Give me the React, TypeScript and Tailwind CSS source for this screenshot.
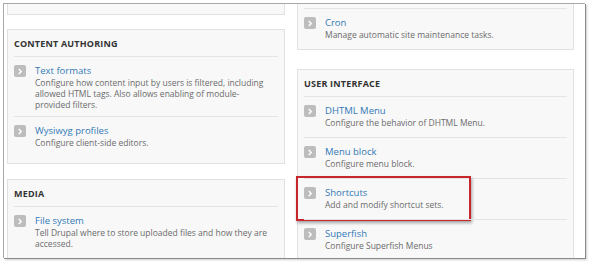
import React from 'react';

interface Item {
  title: string;
  desc: string[];
}

function Chevron() {
  return (
    <span className="flex h-[12px] w-[12px] shrink-0 items-center justify-center rounded-[2px] bg-[#bdbdbd]">
      <svg width="6" height="7" viewBox="0 0 6 7" fill="none">
        <path d="M1.8 1 L4.2 3.5 L1.8 6" stroke="#fff" strokeWidth="1.4" />
      </svg>
    </span>
  );
}

function Entry({ item, highlight }: { item: Item; highlight?: boolean }) {
  // multi-line descriptions sit a little tighter in the original
  const pad = item.desc.length > 1 ? 'pb-[6px]' : 'pb-[9px]';
  return (
    <div className={`relative border-t border-[#e4e4e4] pt-[8px] ${pad}`}>
      <div className="flex items-start gap-[9px]">
        <Chevron />
        <div>
          <div className="text-[9.5px] leading-[12px] text-[#3379b6]">{item.title}</div>
          {item.desc.map((line) => (
            <div key={line} className="text-[8.5px] leading-[11px] text-[#6b6b6b]">
              {line}
            </div>
          ))}
        </div>
      </div>
      {highlight && (
        <div className="absolute top-[-3px] bottom-[-2px] left-[-8px] w-[175px] border-2 border-[#c8262d] shadow-[1px_2px_3px_rgba(0,0,0,0.35)]" />
      )}
    </div>
  );
}

function Panel({ title, items, highlight, className }: { title: string; items: Item[]; highlight?: string; className?: string }) {
  return (
    <div className={`border border-[#e1e1e1] bg-[#f8f8f8] px-[6px] pb-[6px] ${className ?? ''}`}>
      <h2 className="pt-[8px] pb-[6px] text-[9px] leading-[12px] font-bold tracking-[0.2px] text-[#333]">{title}</h2>
      {items.map((it) => (
        <Entry key={it.title} item={it} highlight={it.title === highlight} />
      ))}
    </div>
  );
}

export default function App() {
  return (
    <div className="h-[263px] w-[589px] bg-white pt-[3px] pl-[3px] pr-[4px] pb-[5px]" style={{ fontFamily: '"Open Sans", "DejaVu Sans", sans-serif' }}>
      <div className="h-[255px] overflow-hidden border-t border-l border-[#a9a9a9] bg-white shadow-[1px_1px_0_#8a8a8a,2px_2px_2px_rgba(0,0,0,0.2)]">
        <div className="flex gap-[12px] pl-[3px]">
          {/* Left column */}
          <div className="w-[278px]">
            <div className="h-[11px] border border-t-0 border-[#e1e1e1] bg-[#f8f8f8]" />
            <Panel
              className="mt-[14px]"
              title="CONTENT AUTHORING"
              items={[
                {
                  title: 'Text formats',
                  desc: [
                    'Configure how content input by users is filtered, including',
                    'allowed HTML tags. Also allows enabling of module-',
                    'provided filters.',
                  ],
                },
                { title: 'Wysiwyg profiles', desc: ['Configure client-side editors.'] },
              ]}
            />
            <Panel
              className="mt-[15px] h-[120px]"
              title="MEDIA"
              items={[
                {
                  title: 'File system',
                  desc: ['Tell Drupal where to store uploaded files and how they are', 'accessed.'],
                },
              ]}
            />
          </div>

          {/* Right column */}
          <div className="w-[277px]">
            <div className="border border-t-0 border-[#e1e1e1] bg-[#f8f8f8] px-[6px] pt-[4px]">
              <Entry item={{ title: 'Cron', desc: ['Manage automatic site maintenance tasks.'] }} />
            </div>
            <Panel
              className="mt-[19px] h-[200px]"
              title="USER INTERFACE"
              highlight="Shortcuts"
              items={[
                { title: 'DHTML Menu', desc: ['Configure the behavior of DHTML Menu.'] },
                { title: 'Menu block', desc: ['Configure menu block.'] },
                { title: 'Shortcuts', desc: ['Add and modify shortcut sets.'] },
                { title: 'Superfish', desc: ['Configure Superfish Menus'] },
              ]}
            />
          </div>
        </div>
      </div>
    </div>
  );
}
